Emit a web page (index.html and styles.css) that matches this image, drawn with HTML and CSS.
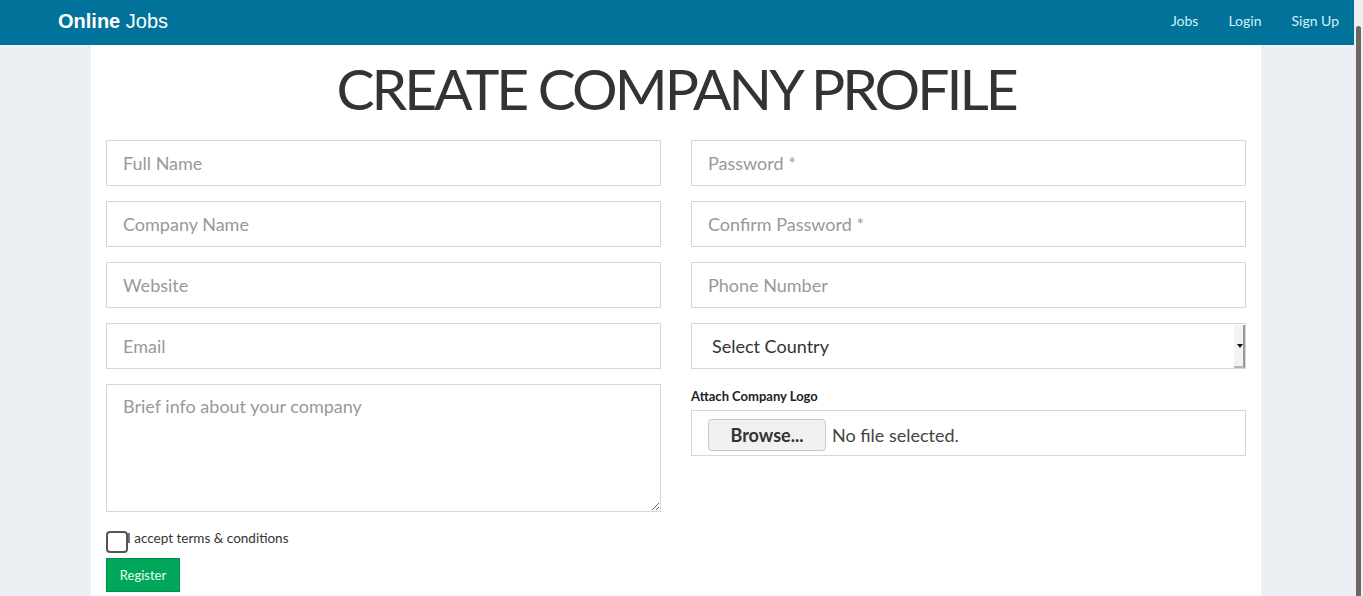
FILE: index.html
```html
<!DOCTYPE html>
<html lang="en">
<head>
<meta charset="utf-8">
<title>Create Company Profile</title>
<link rel="stylesheet" href="styles.css">
</head>
<body>
<div class="page">
  <header class="navbar">
    <a class="brand" href="#"><b>Online</b> Jobs</a>
    <nav class="nav-links">
      <a href="#">Jobs</a>
      <a href="#">Login</a>
      <a href="#">Sign Up</a>
    </nav>
  </header>
  <main class="container">
    <h1 class="title">CREATE COMPANY PROFILE</h1>
    <form class="form-grid">
      <div class="col">
        <input class="field" type="text" placeholder="Full Name">
        <input class="field" type="text" placeholder="Company Name">
        <input class="field" type="text" placeholder="Website">
        <input class="field" type="text" placeholder="Email">
        <textarea class="field area" placeholder="Brief info about your company"></textarea>
        <label class="terms"><span class="checkbox"></span><span class="terms-text">I accept terms &amp; conditions</span></label>
        <div class="btn-row"><button type="button" class="btn-register">Register</button></div>
      </div>
      <div class="col">
        <input class="field" type="password" placeholder="Password *">
        <input class="field" type="password" placeholder="Confirm Password *">
        <input class="field" type="text" placeholder="Phone Number">
        <div class="select-box">
          <span class="select-text">Select Country</span>
          <span class="select-arrow"></span>
        </div>
        <div class="file-group">
          <div class="file-label">Attach Company Logo</div>
          <div class="file-box">
            <span class="browse">Browse...</span>
            <span class="nofile">No file selected.</span>
          </div>
        </div>
      </div>
    </form>
  </main>
</div>
<div class="scroll-track"><div class="scroll-thumb"></div></div>
</body>
</html>
```

FILE: styles.css
```css
html, body {
  margin: 0;
  padding: 0;
  height: 100%;
  overflow: hidden;
}
body {
  background: #ecf0f5;
  font-family: "Lato", "Open Sans", sans-serif;
  color: #333;
}
.page {
  width: 1354px;
  min-height: 100%;
}
.navbar {
  height: 45px;
  background: #01739a;
  display: flex;
  align-items: center;
  justify-content: space-between;
}
.brand {
  padding-left: 58px;
  font-family: "Liberation Sans", Arial, sans-serif;
  font-size: 20px;
  color: #fff;
  text-decoration: none;
  margin-top: -2px;
}
.nav-links {
  display: flex;
  gap: 30px;
  padding-right: 15px;
  margin-top: -4px;
}
.nav-links a {
  color: #d3eff9;
  text-decoration: none;
  font-size: 14px;
}
.container {
  width: 1140px;
  margin-left: 91px;
  padding: 0 15px 10px;
  background: #fff;
  min-height: 560px;
}
.title {
  margin: 0;
  padding-top: 8px;
  text-align: center;
  font-weight: 400;
  font-size: 57px;
  line-height: 70px;
  letter-spacing: -3px;
  color: #333;
}
.form-grid {
  display: grid;
  grid-template-columns: 555px 555px;
  column-gap: 30px;
  margin-top: 17px;
}
.col {
  display: flex;
  flex-direction: column;
  gap: 15px;
}
.field {
  box-sizing: border-box;
  height: 46px;
  width: 100%;
  margin: 0;
  padding: 10px 16px;
  border: 1px solid #d2d6de;
  border-radius: 0;
  font-family: inherit;
  font-size: 18px;
  color: #555;
  background: #fff;
  outline: none;
}
.field::placeholder {
  color: #999;
}
.area {
  height: 128px;
  resize: vertical;
  display: block;
}
.terms {
  display: flex;
  align-items: flex-start;
  margin-top: 4px;
  height: 22px;
}
.checkbox {
  box-sizing: border-box;
  width: 22px;
  height: 22px;
  border: 2px solid #555;
  border-radius: 4px;
  flex: none;
}
.terms-text {
  font-size: 13.5px;
  margin-left: -1px;
  margin-top: -1px;
  color: #333;
}
.btn-row {
  display: flex;
  margin-top: -10px;
}
.btn-register {
  height: 34px;
  width: 74px;
  background: #00a65a;
  border: 1px solid #008d4c;
  color: #e8fff4;
  font-family: inherit;
  font-size: 13px;
  padding: 0;
}
.select-box {
  box-sizing: border-box;
  height: 46px;
  border: 1px solid #d2d6de;
  display: flex;
  align-items: center;
  justify-content: space-between;
  padding-left: 20px;
}
.select-text {
  font-size: 18px;
  color: #333;
}
.select-arrow {
  align-self: stretch;
  width: 9px;
  background: #f3f3f3;
  border-right: 2px solid #9a9a9a;
  border-bottom: 2px solid #b5b5b5;
  display: flex;
  align-items: center;
  justify-content: center;
  margin: 1px 0 0 0;
}
.select-arrow::after {
  content: "";
  border-left: 3px solid transparent;
  border-right: 3px solid transparent;
  border-top: 4px solid #111;
  margin-left: 2px;
}
.file-group {
  display: flex;
  flex-direction: column;
  gap: 6px;
  margin-top: 4px;
}
.file-label {
  font-size: 13px;
  font-weight: 700;
  color: #222;
}
.file-box {
  box-sizing: border-box;
  height: 46px;
  border: 1px solid #d2d6de;
  display: flex;
  align-items: center;
  padding-left: 16px;
  gap: 6px;
}
.browse {
  box-sizing: border-box;
  height: 32px;
  width: 118px;
  border: 1px solid #c8c8c8;
  border-radius: 4px;
  background: #f1f1f1;
  display: flex;
  align-items: center;
  justify-content: center;
  font-size: 18px;
  font-weight: 700;
  color: #333;
  margin-top: 4px;
}
.nofile {
  font-size: 18px;
  color: #444;
  margin-top: 4px;
}
.scroll-track {
  position: fixed;
  top: 0;
  right: 0;
  width: 9px;
  height: 100%;
  background: #eceef1;
}
.scroll-thumb {
  position: absolute;
  top: 26px;
  left: 2px;
  width: 5px;
  height: 620px;
  background: #6b6863;
  border-radius: 3px;
}
```
